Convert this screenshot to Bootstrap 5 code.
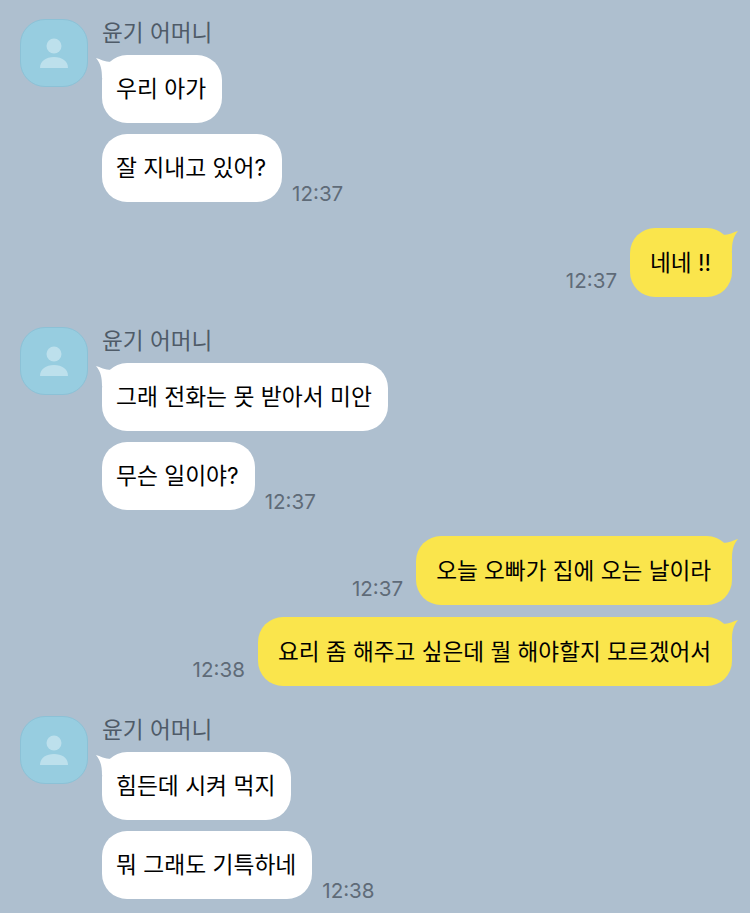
<!DOCTYPE html>
<html lang="ko">
<head>
  <meta charset="UTF-8" />
  <meta name="viewport" content="width=device-width, initial-scale=1" />
  <title>Chat</title>
  <link href="https://cdn.jsdelivr.net/npm/bootstrap@5.3.0/dist/css/bootstrap.min.css" rel="stylesheet" />
  <style>
    body { background: #aebfcf; font-family: "Inter", "Noto Sans CJK KR", sans-serif; height: 913px; overflow: hidden; }
    .chat-wrap { padding: 19px 18px 0 20px; }
    .thread-in { gap: 14px; }
    .thread-in + .thread-out { margin-top: 26px; }
    .thread-out + .thread-in { margin-top: 30px; }
    .thread-out + .thread-out { margin-top: 12px; }
    .avatar-box { width: 68px; height: 68px; border-radius: 25px; background: #97cde0; border: 1px solid #8cc1d6; flex: none; }
    .sender-name { height: 36px; margin: 0; font-size: 22.6px; line-height: 28px; color: #4f5b68; }
    .bubble-box { position: relative; height: 68px; padding: 0 16px 0 14px; border-radius: 25px; font-size: 22.75px; color: #000; display: flex; align-items: center; white-space: nowrap; font-variant-ligatures: none; font-feature-settings: "calt" 0; }
    .bubble-in { background: #fff; }
    .bubble-out { background: #fae54c; height: 69px; padding: 0 21px 0 20px; font-size: 22.6px; }
    .stamp-row + .stamp-row { margin-top: 11px; }
    .tail-in, .tail-out { position: absolute; top: 3px; width: 20px; height: 20px; }
    .tail-in { left: -6px; }
    .tail-out { right: -6px; }
    .time-stamp { font-size: 20.6px; line-height: 22px; color: #5f6b78; margin: 0 13px -3px 10px; }
    .thread-out .time-stamp { margin-bottom: 5px; }
    .stamp-row { align-items: flex-end; }
  </style>
</head>
<body>
  <div class="chat-wrap" id="chat"></div>

  <script src="https://cdn.jsdelivr.net/npm/bootstrap@5.3.0/dist/js/bootstrap.bundle.min.js"></script>
  <script>
    const NAME = "윤기 어머니";
    const thread = [
      { who: "in", lines: ["우리 아가", "잘 지내고 있어?"], time: "12:37" },
      { who: "out", text: "네네 !!", time: "12:37" },
      { who: "in", lines: ["그래 전화는 못 받아서 미안", "무슨 일이야?"], time: "12:37" },
      { who: "out", text: "오늘 오빠가 집에 오는 날이라", time: "12:37" },
      { who: "out", text: "요리 좀 해주고 싶은데 뭘 해야할지 모르겠어서", time: "12:38" },
      { who: "in", lines: ["힘든데 시켜 먹지", "뭐 그래도 기특하네"], time: "12:38" }
    ];

    const avatar = `<div class="avatar-box d-flex align-items-center justify-content-center">
      <svg width="30" height="30" viewBox="0 0 30 30" fill="#bde0ec"><circle cx="15" cy="8" r="7.5"/><path d="M1 30C1 23 7 19 15 19s14 4 14 11z"/></svg></div>`;
    const tailIn = `<svg class="tail-in" viewBox="0 0 20 20"><path d="M0 0C4 1 9 4 15 4L15 20L6 20C6 12 5 6 0 0z" fill="#fff"/></svg>`;
    const tailOut = `<svg class="tail-out" viewBox="0 0 20 20"><path d="M20 0C16 1 11 4 5 4L5 20L14 20C14 12 15 6 20 0z" fill="#fae54c"/></svg>`;

    const html = thread.map(item => {
      if (item.who === "out") {
        return `<div class="thread-out d-flex justify-content-end align-items-end">
          <p class="time-stamp">${item.time}</p>
          <div class="bubble-box bubble-out">${tailOut}${item.text}</div>
        </div>`;
      }
      const rows = item.lines.map((line, i) => {
        const stamp = i === item.lines.length - 1 ? `<p class="time-stamp">${item.time}</p>` : "";
        return `<div class="stamp-row d-flex"><div class="bubble-box bubble-in">${i === 0 ? tailIn : ""}${line}</div>${stamp}</div>`;
      }).join("");
      return `<div class="thread-in d-flex">${avatar}<div>
        <p class="sender-name">${NAME}</p>${rows}</div></div>`;
    }).join("");
    document.getElementById("chat").innerHTML = html;
  </script>
</body>
</html>
